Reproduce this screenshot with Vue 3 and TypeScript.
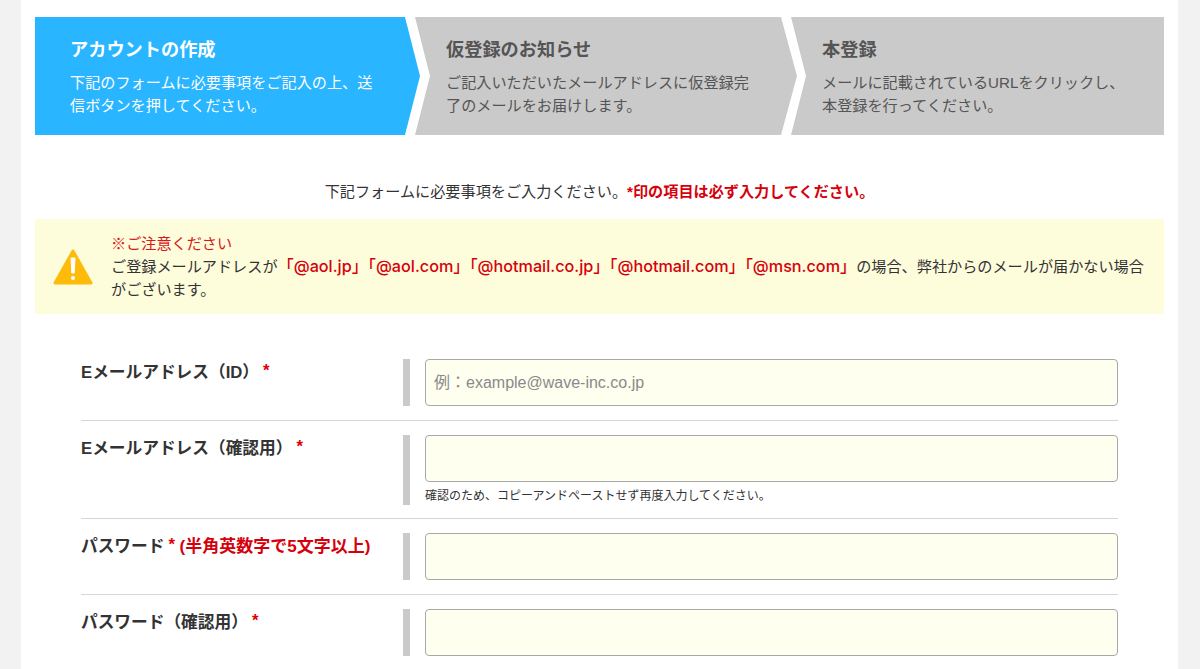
<script setup lang="ts">
interface Step { title: string; lines: string[]; active?: boolean }
const steps: Step[] = [
  { title: 'アカウントの作成', lines: ['下記のフォームに必要事項をご記入の上、送', '信ボタンを押してください。'], active: true },
  { title: '仮登録のお知らせ', lines: ['ご記入いただいたメールアドレスに仮登録完', '了のメールをお届けします。'] },
  { title: '本登録', lines: ['メールに記載されているURLをクリックし、', '本登録を行ってください。'] },
]
const domains = '「@aol.jp」「@aol.com」「@hotmail.co.jp」「@hotmail.com」「@msn.com」'
</script>

<template>
  <div class="page">
    <main class="sheet">
      <ol class="steps">
        <li v-for="s in steps" :key="s.title" class="step" :class="{ active: s.active }">
          <h2>{{ s.title }}</h2>
          <p v-for="l in s.lines" :key="l">{{ l }}</p>
        </li>
      </ol>

      <p class="lead">下記フォームに必要事項をご入力ください。<strong>*印の項目は必ず入力してください。</strong></p>

      <section class="alert">
        <svg class="warn" width="40" height="36" viewBox="0 0 40 36">
          <path d="M20 2 L38 34 L2 34 Z" fill="#ffbb0a" stroke="#ffbb0a" stroke-width="3" stroke-linejoin="round" />
          <path d="M18 9 h4 l-0.8 15 h-2.4 Z" fill="#fff" stroke="#fff" stroke-width="1" stroke-linejoin="round" />
          <circle cx="20" cy="29" r="2" fill="#fff" />
        </svg>
        <div class="alert-text">
          <div class="caution">※ご注意ください</div>
          <div>ご登録メールアドレスが<strong>{{ domains }}</strong>の場合、弊社からのメールが届かない場合がございます。</div>
        </div>
      </section>

      <form class="form">
        <div class="row">
          <div class="label">Eメールアドレス（ID）<span class="req">*</span></div>
          <div class="field"><input type="text" placeholder="例：example@wave-inc.co.jp" /></div>
        </div>
        <div class="row note-row">
          <div class="label">Eメールアドレス（確認用）<span class="req">*</span></div>
          <div class="field">
            <input type="text" />
            <small>確認のため、コピーアンドペーストせず再度入力してください。</small>
          </div>
        </div>
        <div class="row">
          <div class="label">パスワード<span class="req">*</span> <span class="hint">(半角英数字で5文字以上)</span></div>
          <div class="field"><input type="password" /></div>
        </div>
        <div class="row">
          <div class="label">パスワード（確認用）<span class="req">*</span></div>
          <div class="field"><input type="password" /></div>
        </div>
      </form>
    </main>
  </div>
</template>

<style>
html, body { margin: 0; background: #f2f2f2; }
</style>

<style scoped>
.page {
  height: 669px;
  overflow: hidden;
  font-family: "Liberation Sans", "Noto Sans CJK JP", sans-serif;
  color: #333;
}
.sheet {
  width: 1129px;
  height: 652px;
  margin: 0 22px 0 21px;
  padding: 17px 14px 0;
  background: #fff;
}
.steps {
  display: grid;
  grid-template-columns: 376px 376px 377px;
  margin: 0;
  padding: 0;
  list-style: none;
  isolation: isolate;
}
.step {
  position: relative;
  height: 118px;
  box-sizing: border-box;
  padding: 20px 30px 0 35px;
  color: #555;
}
.step::before {
  content: "";
  position: absolute;
  z-index: -1;
  top: 0;
  bottom: 0;
  left: 4px;
  right: -10px;
  background: #cacaca;
  clip-path: polygon(0 0, calc(100% - 16px) 0, 100% 50%, calc(100% - 16px) 100%, 0 100%, 15px 50%);
}
.step:first-child::before {
  left: 0;
  right: -9px;
  background: #29b5ff;
  clip-path: polygon(0 0, calc(100% - 15px) 0, 100% 50%, calc(100% - 15px) 100%, 0 100%);
}
.step:last-child::before {
  right: 0;
  clip-path: polygon(0 0, 100% 0, 100% 100%, 0 100%, 15px 50%);
}
.step.active { color: #fff; }
.step h2 {
  margin: 0 0 7px;
  font-size: 18.2px;
  line-height: 27px;
  font-weight: 700;
}
.step p {
  margin: 0;
  font-size: 15.15px;
  line-height: 23px;
  white-space: nowrap;
}
.lead {
  margin: 45px 0 16px;
  font-size: 15.15px;
  line-height: 23px;
  text-align: center;
}
.lead strong { color: #d6000c; font-weight: 700; }
.alert strong {
  color: #d6000c;
  font-family: Inter, "Noto Sans CJK JP", sans-serif;
  font-size: 16.2px;
  line-height: 20px;
  font-weight: 500;
}
.alert {
  display: flex;
  align-items: center;
  gap: 18px;
  height: 95px;
  box-sizing: border-box;
  padding: 0 18px;
  border-radius: 3px;
  background: #fdfcdb;
}
.warn { flex: none; }
.alert-text {
  font-size: 15.15px;
  line-height: 23px;
}
.caution { color: #d8161c; }
.form {
  margin: 31px 46px 0 46px;
}
.row {
  display: flex;
  padding: 14px 0;
  border-bottom: 1px solid #d6d6d6;
}
.note-row { padding-bottom: 13px; }
.row:last-child { border-bottom: 0; }
.label {
  flex: 0 0 322px;
  font-size: 16.7px;
  line-height: 24px;
  font-weight: 700;
  color: #333;
}
.req {
  color: #e00000;
  margin-left: 4px;
  vertical-align: 2px;
}
.hint {
  color: #d6000c;
  font-size: 17px;
}
.field {
  flex: 1;
  display: flex;
  flex-direction: column;
  border-left: 7px solid #cacaca;
  padding-left: 15px;
}
input {
  display: block;
  width: 100%;
  height: 47px;
  box-sizing: border-box;
  padding: 0 8px;
  border: 1px solid #a8a8a8;
  border-radius: 4px;
  background: #fffff0;
  font: 16px "Liberation Sans", "Noto Sans CJK JP", sans-serif;
  color: #333;
  outline: none;
}
input::placeholder { color: #8a8a8a; opacity: 1; }
small {
  display: block;
  margin-top: 5px;
  font-size: 12px;
  line-height: 18px;
  color: #333;
}
</style>
